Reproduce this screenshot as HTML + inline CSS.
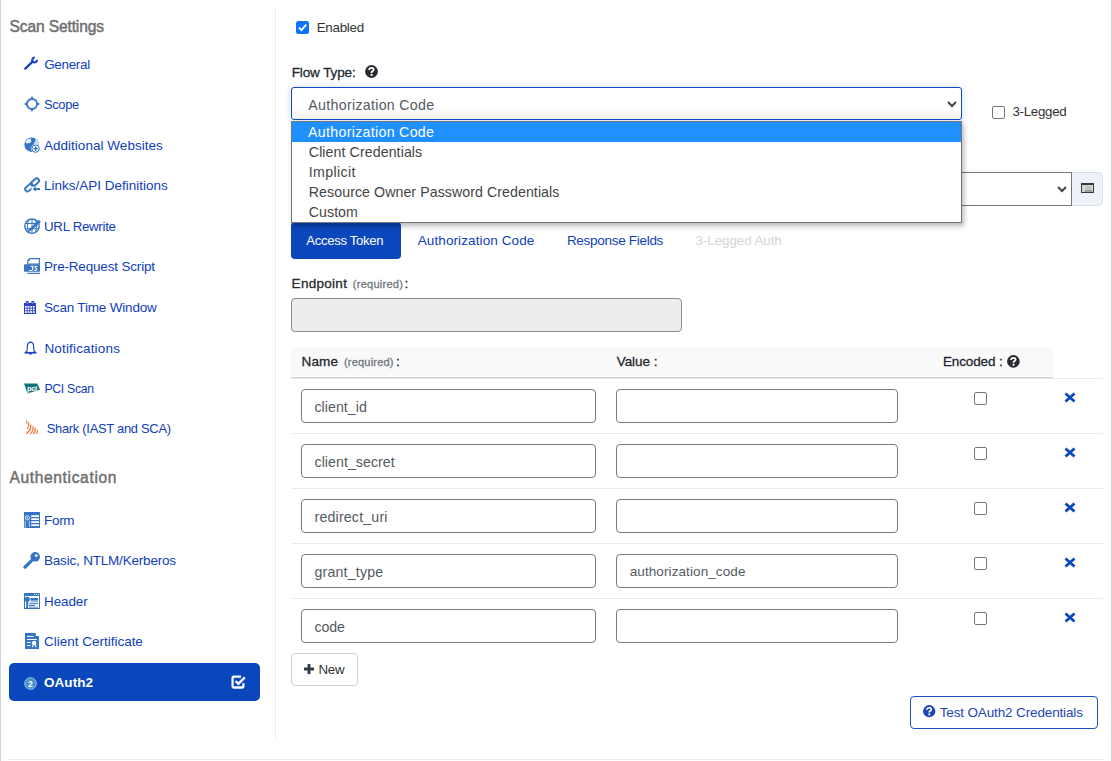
<!DOCTYPE html>
<html><head><meta charset="utf-8"><style>
html,body{margin:0;padding:0;background:#fff;}
body{width:1112px;height:761px;position:relative;overflow:hidden;font-family:"Liberation Sans",sans-serif;}
.t{position:absolute;white-space:nowrap;line-height:1;}
.b{position:absolute;}
svg.b{overflow:visible;}
</style></head><body>
<svg class="b" style="left:24px;top:56px" width="14" height="14" viewBox="0 0 14 14"><path d="M1.3 12.6 L8.6 5.6" stroke="#1640c0" stroke-width="2.3" stroke-linecap="round"/><path d="M13.04 3.79 A2.45 2.45 0 1 1 10.81 1.56" stroke="#1640c0" stroke-width="2.1" fill="none"/></svg>
<svg class="b" style="left:24px;top:96px" width="16" height="16" viewBox="0 0 16 16"><circle cx="8" cy="8" r="5.05" stroke="#3575c4" stroke-width="1.9" fill="none"/><path d="M8 0 L9.4 2.3 L6.6 2.3 Z" fill="#3575c4"/><path d="M8 16 L9.4 13.7 L6.6 13.7 Z" fill="#3575c4"/><path d="M0 8 L2.3 6.6 L2.3 9.4 Z" fill="#3575c4"/><path d="M16 8 L13.7 6.6 L13.7 9.4 Z" fill="#3575c4"/></svg>
<svg class="b" style="left:24px;top:137px" width="16" height="16" viewBox="0 0 16 16"><circle cx="7.7" cy="7.7" r="7.3" fill="#3575c4"/><path d="M1.6 4.2 Q3.8 1.2 7.2 1.5 Q6.2 3.4 7.6 4.6 Q5.6 6.8 2.6 6.6 Q1.2 5.6 1.6 4.2 Z" fill="#fff" opacity=".9"/><path d="M11.2 1.6 Q14.6 3.6 15 7.4 L11 8.2 Q9.2 7.2 10.4 5.2 Q12 4 11.2 1.6 Z" fill="#fff" opacity=".75"/><path d="M8.4 8.4 Q10.2 9 10.4 11 L10 15 Q8.4 15.2 8.5 13 Q9 11 8.4 8.4 Z" fill="#fff" opacity=".9"/><circle cx="11.6" cy="11.6" r="4.5" fill="#fff"/><circle cx="11.6" cy="11.6" r="3.7" fill="none" stroke="#3575c4" stroke-width="1"/><path d="M11.6 9.3 V13.9 M9.3 11.6 H13.9" stroke="#3575c4" stroke-width="1.4"/></svg>
<svg class="b" style="left:24px;top:177px" width="16" height="16" viewBox="0 0 16 16"><g fill="none" stroke="#3575c4" stroke-width="1.9"><rect x="-4.6" y="-2.3" width="9.2" height="4.6" rx="2.3" transform="translate(5.2 10.6) rotate(-42)"/><rect x="-4.6" y="-2.3" width="9.2" height="4.6" rx="2.3" transform="translate(11 5.2) rotate(-42)"/></g><rect x="7.4" y="9.6" width="3" height="3" fill="#fff"/><path d="M10.5 12 H16" stroke="#3575c4" stroke-width="1.9"/><path d="M8.6 12 L11.8 9.4 L11.8 14.6 Z" fill="#3575c4"/></svg>
<svg class="b" style="left:24px;top:218px" width="16" height="16" viewBox="0 0 16 16"><circle cx="8" cy="8.2" r="7.2" fill="none" stroke="#3575c4" stroke-width="1.4"/><path d="M1 5.5 H15 M1 10.8 H15 M8 1 V15.4 M4.5 2 Q2 8 4.5 14.5 M11.5 2 Q14 8 11.5 14.5" stroke="#3575c4" stroke-width="1" fill="none"/><path d="M6.5 12.2 L4.8 13.2 L5.8 11.4 L13.2 4 L14.6 5.4 Z M13.6 3.6 L14.6 2.6 L16 4 L15 5 Z" fill="#3575c4" stroke="#3575c4" stroke-width="1.2"/></svg>
<svg class="b" style="left:24px;top:258px" width="16" height="16" viewBox="0 0 16 16"><path d="M5.6 0.6 H15.4 V6 H3.8 V2.6 Z" fill="#fff" stroke="#3575c4" stroke-width="1.1"/><path d="M3.4 2.8 L5.6 0.4 V3 H3.4Z" fill="#3575c4"/><rect x="0" y="6.2" width="16" height="7.6" rx=".8" fill="#3575c4"/><rect x="3.4" y="14.8" width="12.6" height="1.2" fill="#3575c4"/><path d="M6.6 8.2 H9.4 M8.7 8.2 V11.2 Q8.5 12.5 7.3 12.5 H5.2 M13.4 8.6 Q12.2 7.9 11.1 8.5 Q10.6 9.4 11.8 9.9 Q13.2 10.4 12.8 11.8 Q11.7 12.6 10.2 12.3" stroke="#fff" stroke-width="1.1" fill="none"/></svg>
<svg class="b" style="left:24px;top:301px" width="12" height="13" viewBox="0 0 12 13"><rect x="0" y="2" width="12" height="11" fill="#2a3fc4"/><path d="M1.8 0 H4.6 V3 H1.8 Z M7.4 0 H10.2 V3 H7.4Z" fill="#2a3fc4"/><path d="M3.2 .9 V2.6 M8.8 .9 V2.6" stroke="#fff" stroke-width=".8" opacity=".75"/><rect x="1.00" y="5.00" width="1.8" height="1.75" fill="#fff"/><rect x="1.00" y="7.60" width="1.8" height="1.75" fill="#fff"/><rect x="1.00" y="10.20" width="1.8" height="1.75" fill="#fff"/><rect x="3.60" y="5.00" width="1.8" height="1.75" fill="#fff"/><rect x="3.60" y="7.60" width="1.8" height="1.75" fill="#fff"/><rect x="3.60" y="10.20" width="1.8" height="1.75" fill="#fff"/><rect x="6.20" y="5.00" width="1.8" height="1.75" fill="#fff"/><rect x="6.20" y="7.60" width="1.8" height="1.75" fill="#fff"/><rect x="6.20" y="10.20" width="1.8" height="1.75" fill="#fff"/><rect x="8.80" y="5.00" width="1.8" height="1.75" fill="#fff"/><rect x="8.80" y="7.60" width="1.8" height="1.75" fill="#fff"/><rect x="8.80" y="10.20" width="1.8" height="1.75" fill="#fff"/></svg>
<svg class="b" style="left:24px;top:341px" width="13" height="14" viewBox="0 0 13 14"><path d="M6.5 1.3 Q9.5 1.6 9.6 4.5 L10 10 L11.8 11.7 H1.2 L3 10 L3.4 4.5 Q3.5 1.6 6.5 1.3 Z" fill="none" stroke="#1d3fc0" stroke-width="1.1"/><path d="M1.2 11.7 H11.8" stroke="#1d3fc0" stroke-width="1.6"/><path d="M5 12.3 H8 L7.2 13.8 H5.8 Z" fill="#1d3fc0"/><circle cx="6.5" cy="1" r=".7" fill="#1d3fc0"/></svg>
<svg class="b" style="left:24px;top:383px" width="16" height="11" viewBox="0 0 16 11"><path d="M0 0.6 L13.3 0.6 L16 6.8 L3.4 10.6 Z" fill="#127177"/><text x="3" y="8.2" font-size="7.6" font-weight="bold" fill="#fff" font-family="Liberation Sans" letter-spacing="-.4">pci</text></svg>
<svg class="b" style="left:25px;top:420px" width="14" height="15" viewBox="0 0 14 15"><g stroke="#f47c3c" stroke-width="1.3" fill="none" stroke-linecap="round"><path d="M1.6 1.2 L2 3"/><path d="M3.6 3 Q4 6 2.6 8.5"/><path d="M5.7 5 Q6.5 9.5 1.6 13.6"/><path d="M8 6.6 Q8.6 10.6 5.6 13.6"/><path d="M10.2 8.2 Q10.5 11.5 8.6 13.6"/><path d="M12.5 10.4 Q12.6 12.6 11.5 13.6"/></g></svg>
<svg class="b" style="left:24px;top:512px" width="16" height="16" viewBox="0 0 16 16"><rect x="0" y="0" width="16" height="16" fill="#3575c4"/><path d="M7.2 3.2 H15 V5 H7.2Z M7.2 6.3 H15 V8 H7.2Z M7.2 9.3 H15 V11 H7.2Z M7.2 12.3 H15 V14 H7.2Z" fill="#fff"/><circle cx="3.4" cy="5.8" r="2.1" fill="none" stroke="#fff" stroke-width=".9" opacity=".85"/><path d="M1.2 8.8 V16 M5.3 8.8 V15" stroke="#fff" stroke-width=".8" opacity=".8"/><circle cx="3.4" cy="5.8" r=".8" fill="#fff"/></svg>
<svg class="b" style="left:24px;top:552px" width="16" height="16" viewBox="0 0 16 16"><circle cx="11.2" cy="4.8" r="4.8" fill="#3575c4"/><circle cx="12.3" cy="3.6" r="1.4" fill="#fff"/><path d="M9 7.2 L1.2 15" stroke="#3575c4" stroke-width="3.2" stroke-linecap="square"/></svg>
<svg class="b" style="left:24px;top:593px" width="16" height="16" viewBox="0 0 16 16"><rect x="0.5" y="0.5" width="15" height="15" fill="#fff" stroke="#3575c4" stroke-width="1"/><rect x="0" y="0" width="16" height="3" fill="#3575c4"/><circle cx="10.6" cy="1.5" r=".6" fill="#fff"/><circle cx="12.6" cy="1.5" r=".6" fill="#fff"/><circle cx="14.6" cy="1.5" r=".6" fill="#fff"/><circle cx="3.2" cy="6.3" r="2.6" fill="#3575c4"/><path d="M3.2 8 V15.5" stroke="#3575c4" stroke-width="2"/><rect x="6.5" y="5" width="7.5" height="2.6" fill="#3575c4"/><rect x="6.5" y="8.2" width="7.5" height="1.2" fill="#3575c4" opacity=".6"/><rect x="5" y="10.2" width="9" height="1" fill="#3575c4"/><rect x="5" y="12" width="6" height="1" fill="#3575c4"/><rect x="5" y="13.5" width="9" height="1.6" fill="#3575c4" opacity=".55"/></svg>
<svg class="b" style="left:25px;top:633px" width="14" height="16" viewBox="0 0 14 16"><path d="M0 0 H10.8 V3 H14 V16 H0 Z" fill="#3575c4"/><path d="M2 3.4 H8.6 M2 6.5 H11.8 M2 9.5 H5.8 M2 12.5 H5.5" stroke="#fff" stroke-width="1"/><circle cx="9.2" cy="10" r="2.2" fill="#fff"/><path d="M8 12 L7.5 14.2 M10.4 12 L11 14.2" stroke="#fff" stroke-width="1.2"/></svg>
<div class="b" style="left:0px;top:0px;width:1px;height:761px;background:#d6d6d6"></div>
<div class="b" style="left:1111px;top:0px;width:1px;height:761px;background:#d6d6d6"></div>
<div class="b" style="left:9px;top:759px;width:1094px;height:1px;background:#ebebeb"></div>
<div class="b" style="left:275px;top:8px;width:1px;height:730px;background:#ebebeb"></div>
<div class="t" style="left:9.50px;top:19.00px;font-size:15.60px;font-weight:400;color:#707070;letter-spacing:-0.140px;-webkit-text-stroke:0.45px #707070;">Scan Settings</div>
<div class="t" style="left:44.20px;top:58.00px;font-size:13.45px;font-weight:400;color:#0f40bd;letter-spacing:-0.300px;">General</div>
<div class="t" style="left:43.90px;top:99.00px;font-size:12.86px;font-weight:400;color:#0f40bd;letter-spacing:-0.300px;">Scope</div>
<div class="t" style="left:43.90px;top:139.00px;font-size:13.50px;font-weight:400;color:#0f40bd;letter-spacing:0.034px;">Additional Websites</div>
<div class="t" style="left:43.90px;top:179.00px;font-size:13.50px;font-weight:400;color:#0f40bd;letter-spacing:-0.003px;">Links/API Definitions</div>
<div class="t" style="left:44.00px;top:220.00px;font-size:13.32px;font-weight:400;color:#0f40bd;letter-spacing:-0.300px;">URL Rewrite</div>
<div class="t" style="left:44.00px;top:260.00px;font-size:13.50px;font-weight:400;color:#0f40bd;letter-spacing:-0.177px;">Pre-Request Script</div>
<div class="t" style="left:44.00px;top:301.00px;font-size:13.50px;font-weight:400;color:#0f40bd;letter-spacing:-0.182px;">Scan Time Window</div>
<div class="t" style="left:44.40px;top:342.00px;font-size:13.50px;font-weight:400;color:#0f40bd;letter-spacing:0.163px;">Notifications</div>
<div class="t" style="left:44.40px;top:383.00px;font-size:12.25px;font-weight:400;color:#0f40bd;letter-spacing:-0.300px;">PCI Scan</div>
<div class="t" style="left:46.70px;top:423.00px;font-size:12.96px;font-weight:400;color:#0f40bd;letter-spacing:-0.300px;">Shark (IAST and SCA)</div>
<div class="t" style="left:9.40px;top:470.00px;font-size:15.60px;font-weight:400;color:#707070;letter-spacing:0.635px;-webkit-text-stroke:0.45px #707070;">Authentication</div>
<div class="t" style="left:44.00px;top:514.00px;font-size:13.49px;font-weight:400;color:#0f40bd;letter-spacing:-0.300px;">Form</div>
<div class="t" style="left:44.00px;top:554.00px;font-size:13.50px;font-weight:400;color:#0f40bd;letter-spacing:-0.197px;">Basic, NTLM/Kerberos</div>
<div class="t" style="left:44.00px;top:595.00px;font-size:13.50px;font-weight:400;color:#0f40bd;letter-spacing:-0.123px;">Header</div>
<div class="t" style="left:44.00px;top:635.00px;font-size:13.50px;font-weight:400;color:#0f40bd;letter-spacing:-0.009px;">Client Certificate</div>
<div class="b" style="left:9px;top:663px;width:251px;height:38px;background:#0b47bc;border-radius:5px"></div>
<div class="t" style="left:44.00px;top:676.00px;font-size:13.50px;font-weight:700;color:#fff;letter-spacing:0.053px;">OAuth2</div>
<svg class="b" style="left:24px;top:677px" width="13" height="13" viewBox="0 0 13 13"><circle cx="6.5" cy="6.5" r="6.4" fill="#4a8fd0"/><circle cx="6.5" cy="6.5" r="5.7" fill="none" stroke="#cfe2f5" stroke-width="1" stroke-dasharray="1 1.2"/><text x="4" y="9.6" font-size="8.5" font-weight="bold" fill="#fff" font-family="Liberation Sans">2</text></svg>
<svg class="b" style="left:231px;top:675px" width="15" height="14" viewBox="0 0 15 14"><path d="M10 1.7 H3 Q1.6 1.7 1.6 3.1 V11.1 Q1.6 12.5 3 12.5 H11 Q12.4 12.5 12.4 11.1 V8.2" stroke="#fff" stroke-width="2.3" fill="none"/><path d="M4.6 6 L7.4 8.8 L13.8 2.4" stroke="#fff" stroke-width="2.3" fill="none"/></svg>
<div class="b" style="left:296px;top:21px;width:13px;height:13px;background:#0b72fa;border-radius:2.5px"></div>
<svg class="b" style="left:296px;top:21px" width="13" height="13" viewBox="0 0 13 13"><path d="M2.9 6.6 L5.5 9.1 L10.2 3.6" stroke="#fff" stroke-width="2" fill="none"/></svg>
<div class="t" style="left:316.70px;top:21.00px;font-size:13.42px;font-weight:400;color:#333;letter-spacing:-0.300px;">Enabled</div>
<div class="t" style="left:291.65px;top:66.00px;font-size:13.50px;font-weight:400;color:#23272b;letter-spacing:-0.105px;-webkit-text-stroke:0.28px #23272b;">Flow Type:</div>
<svg class="b" style="left:364.8px;top:64.8px" width="13" height="13" viewBox="0 0 13 13"><circle cx="6.5" cy="6.5" r="6.4" fill="#2b2b33"/><path d="M4.2 5 V4.3 Q4.6 2.9 6.5 2.9 Q8.7 2.9 8.7 4.6 Q8.7 5.7 7.4 6.3 Q6.6 6.7 6.6 7.5 V7.9" stroke="#fff" stroke-width="1.8" fill="none"/><rect x="5.6" y="8.9" width="2" height="1.9" fill="#fff"/></svg>
<div class="b" style="left:291px;top:172px;width:781px;height:34px;background:#fff;border:1px solid #767676;box-sizing:border-box"></div>
<svg class="b" style="left:1057px;top:186px" width="10" height="7" viewBox="0 0 10 7"><path d="M1 1 L5 5 L9 1" stroke="#444" stroke-width="2" fill="none"/></svg>
<div class="b" style="left:1072px;top:172px;width:31px;height:34px;background:#eef2f8;border:1px solid #d5dfec;border-left:none;border-radius:0 5px 5px 0;box-sizing:border-box"></div>
<svg class="b" style="left:1081px;top:183px" width="13" height="10" viewBox="0 0 13 10"><rect x="0.5" y="0.5" width="12" height="9" fill="#fff" stroke="#3a3a3a"/><rect x="0" y="0" width="13" height="2.2" fill="#3a3a3a"/><path d="M3.5 4 H11.5 M3.5 6 H11.5" stroke="#8a8a8a" stroke-width="1"/><path d="M3.5 8 H11.5" stroke="#3a3a3a" stroke-width="1"/><path d="M2 3 V9" stroke="#8ab" stroke-width="1"/></svg>
<div class="b" style="left:291px;top:87px;width:671px;height:33px;background:linear-gradient(#fff 60%,#f4f4f4);border:1px solid #0f47c6;border-radius:3px;box-sizing:border-box;box-shadow:0 0 6px 2px rgba(70,120,225,.16)"></div>
<div class="t" style="left:308.30px;top:98.00px;font-size:14.20px;font-weight:400;color:#555a5f;letter-spacing:0.304px;">Authorization Code</div>
<svg class="b" style="left:947px;top:101px" width="10" height="7" viewBox="0 0 10 7"><path d="M1 1 L5 5 L9 1" stroke="#444" stroke-width="2" fill="none"/></svg>
<div class="b" style="left:992px;top:106px;width:13px;height:13px;background:#fff;border:1px solid #767676;border-radius:2px;box-sizing:border-box"></div>
<div class="t" style="left:1012.50px;top:105.00px;font-size:13.34px;font-weight:400;color:#333;letter-spacing:-0.300px;">3-Legged</div>
<div class="b" style="left:291px;top:222px;width:110px;height:37px;background:#0b47bc;border-radius:4px"></div>
<div class="t" style="left:306.30px;top:234.00px;font-size:13.12px;font-weight:400;color:#fff;letter-spacing:-0.300px;">Access Token</div>
<div class="t" style="left:417.70px;top:234.00px;font-size:13.50px;font-weight:400;color:#0f40bd;letter-spacing:0.107px;">Authorization Code</div>
<div class="t" style="left:566.90px;top:234.00px;font-size:13.50px;font-weight:400;color:#0f40bd;letter-spacing:-0.291px;">Response Fields</div>
<div class="t" style="left:695.50px;top:234.00px;font-size:13.50px;font-weight:400;color:#d3d6da;letter-spacing:-0.124px;">3-Legged Auth</div>
<div class="b" style="left:291px;top:121px;width:671px;height:102px;background:#fff;border:1px solid #767676;box-sizing:border-box;box-shadow:2px 3px 5px rgba(0,0,0,.28)"></div>
<div class="b" style="left:292px;top:122px;width:669px;height:20px;background:#1e90ff"></div>
<div class="t" style="left:308.10px;top:125.00px;font-size:14.20px;font-weight:400;color:#fff;letter-spacing:0.304px;">Authorization Code</div>
<div class="t" style="left:308.80px;top:145.00px;font-size:14.20px;font-weight:400;color:#454545;letter-spacing:0.083px;">Client Credentials</div>
<div class="t" style="left:308.80px;top:165.00px;font-size:14.20px;font-weight:400;color:#454545;letter-spacing:0.348px;">Implicit</div>
<div class="t" style="left:308.80px;top:185.00px;font-size:14.20px;font-weight:400;color:#454545;letter-spacing:0.064px;">Resource Owner Password Credentials</div>
<div class="t" style="left:308.80px;top:205.00px;font-size:14.20px;font-weight:400;color:#454545;letter-spacing:0.036px;">Custom</div>
<div class="t" style="left:291.60px;top:277.00px;font-size:13.50px;font-weight:400;color:#23272b;letter-spacing:0.287px;-webkit-text-stroke:0.28px #23272b;">Endpoint</div>
<div class="t" style="left:352.80px;top:279.00px;font-size:11.00px;font-weight:400;color:#6f757b;letter-spacing:0.257px;-webkit-text-stroke:0.28px #6f757b;">(required)</div>
<div class="t" style="left:404.60px;top:277.00px;font-size:13.50px;font-weight:400;color:#23272b;letter-spacing:0.000px;-webkit-text-stroke:0.28px #23272b;">:</div>
<div class="b" style="left:291px;top:298px;width:391px;height:34px;background:#ededed;border:1px solid #8c8c8c;border-radius:4px;box-sizing:border-box"></div>
<div class="b" style="left:291px;top:347px;width:762px;height:29px;background:#f9f9f9"></div>
<div class="b" style="left:291px;top:377px;width:762px;height:1px;background:#cfcfcf"></div>
<div class="t" style="left:301.50px;top:355.00px;font-size:13.50px;font-weight:400;color:#23272b;letter-spacing:0.174px;-webkit-text-stroke:0.28px #23272b;">Name</div>
<div class="t" style="left:344.00px;top:357.00px;font-size:11.00px;font-weight:400;color:#6f757b;letter-spacing:0.202px;-webkit-text-stroke:0.28px #6f757b;">(required)</div>
<div class="t" style="left:396.00px;top:355.00px;font-size:13.50px;font-weight:400;color:#23272b;letter-spacing:0.000px;-webkit-text-stroke:0.28px #23272b;">:</div>
<div class="t" style="left:616.70px;top:355.00px;font-size:13.50px;font-weight:400;color:#23272b;letter-spacing:-0.047px;-webkit-text-stroke:0.28px #23272b;">Value :</div>
<div class="t" style="left:943.00px;top:355.00px;font-size:13.50px;font-weight:400;color:#23272b;letter-spacing:-0.131px;-webkit-text-stroke:0.28px #23272b;">Encoded :</div>
<svg class="b" style="left:1006.5px;top:354.5px" width="12.8" height="12.8" viewBox="0 0 13 13"><circle cx="6.5" cy="6.5" r="6.4" fill="#2b2b33"/><path d="M4.2 5 V4.3 Q4.6 2.9 6.5 2.9 Q8.7 2.9 8.7 4.6 Q8.7 5.7 7.4 6.3 Q6.6 6.7 6.6 7.5 V7.9" stroke="#fff" stroke-width="1.8" fill="none"/><rect x="5.6" y="8.9" width="2" height="1.9" fill="#fff"/></svg>
<div class="b" style="left:291px;top:378px;width:812px;height:1px;background:#e6ecf3"></div>
<div class="b" style="left:301px;top:389px;width:295px;height:34px;background:#fff;border:1px solid #7b7b7b;border-radius:4px;box-sizing:border-box"></div>
<div class="b" style="left:616px;top:389px;width:282px;height:34px;background:#fff;border:1px solid #7b7b7b;border-radius:4px;box-sizing:border-box"></div>
<div class="t" style="left:314.50px;top:400.00px;font-size:14.20px;font-weight:400;color:#555a5f;letter-spacing:0.029px;">client_id</div>
<div class="b" style="left:974px;top:392px;width:13px;height:13px;background:#fff;border:1px solid #767676;border-radius:2px;box-sizing:border-box"></div>
<svg class="b" style="left:1064px;top:392px" width="12" height="11" viewBox="0 0 12 11"><path d="M1.5 1.5 L10.5 9.5 M10.5 1.5 L1.5 9.5" stroke="#0b47bc" stroke-width="2.8" stroke-linecap="butt"/></svg>
<div class="b" style="left:291px;top:433px;width:812px;height:1px;background:#e6ecf3"></div>
<div class="b" style="left:301px;top:444px;width:295px;height:34px;background:#fff;border:1px solid #7b7b7b;border-radius:4px;box-sizing:border-box"></div>
<div class="b" style="left:616px;top:444px;width:282px;height:34px;background:#fff;border:1px solid #7b7b7b;border-radius:4px;box-sizing:border-box"></div>
<div class="t" style="left:314.50px;top:455.00px;font-size:14.20px;font-weight:400;color:#555a5f;letter-spacing:0.045px;">client_secret</div>
<div class="b" style="left:974px;top:447px;width:13px;height:13px;background:#fff;border:1px solid #767676;border-radius:2px;box-sizing:border-box"></div>
<svg class="b" style="left:1064px;top:447px" width="12" height="11" viewBox="0 0 12 11"><path d="M1.5 1.5 L10.5 9.5 M10.5 1.5 L1.5 9.5" stroke="#0b47bc" stroke-width="2.8" stroke-linecap="butt"/></svg>
<div class="b" style="left:291px;top:488px;width:812px;height:1px;background:#e6ecf3"></div>
<div class="b" style="left:301px;top:499px;width:295px;height:34px;background:#fff;border:1px solid #7b7b7b;border-radius:4px;box-sizing:border-box"></div>
<div class="b" style="left:616px;top:499px;width:282px;height:34px;background:#fff;border:1px solid #7b7b7b;border-radius:4px;box-sizing:border-box"></div>
<div class="t" style="left:314.50px;top:510.00px;font-size:14.20px;font-weight:400;color:#555a5f;letter-spacing:0.182px;">redirect_uri</div>
<div class="b" style="left:974px;top:502px;width:13px;height:13px;background:#fff;border:1px solid #767676;border-radius:2px;box-sizing:border-box"></div>
<svg class="b" style="left:1064px;top:502px" width="12" height="11" viewBox="0 0 12 11"><path d="M1.5 1.5 L10.5 9.5 M10.5 1.5 L1.5 9.5" stroke="#0b47bc" stroke-width="2.8" stroke-linecap="butt"/></svg>
<div class="b" style="left:291px;top:543px;width:812px;height:1px;background:#e6ecf3"></div>
<div class="b" style="left:301px;top:554px;width:295px;height:34px;background:#fff;border:1px solid #7b7b7b;border-radius:4px;box-sizing:border-box"></div>
<div class="b" style="left:616px;top:554px;width:282px;height:34px;background:#fff;border:1px solid #7b7b7b;border-radius:4px;box-sizing:border-box"></div>
<div class="t" style="left:314.50px;top:565.00px;font-size:14.20px;font-weight:400;color:#555a5f;letter-spacing:0.178px;">grant_type</div>
<div class="t" style="left:629.70px;top:565.00px;font-size:13.50px;font-weight:400;color:#555a5f;letter-spacing:0.098px;">authorization_code</div>
<div class="b" style="left:974px;top:557px;width:13px;height:13px;background:#fff;border:1px solid #767676;border-radius:2px;box-sizing:border-box"></div>
<svg class="b" style="left:1064px;top:557px" width="12" height="11" viewBox="0 0 12 11"><path d="M1.5 1.5 L10.5 9.5 M10.5 1.5 L1.5 9.5" stroke="#0b47bc" stroke-width="2.8" stroke-linecap="butt"/></svg>
<div class="b" style="left:291px;top:598px;width:812px;height:1px;background:#e6ecf3"></div>
<div class="b" style="left:301px;top:609px;width:295px;height:34px;background:#fff;border:1px solid #7b7b7b;border-radius:4px;box-sizing:border-box"></div>
<div class="b" style="left:616px;top:609px;width:282px;height:34px;background:#fff;border:1px solid #7b7b7b;border-radius:4px;box-sizing:border-box"></div>
<div class="t" style="left:314.50px;top:620.00px;font-size:14.20px;font-weight:400;color:#555a5f;letter-spacing:-0.114px;">code</div>
<div class="b" style="left:974px;top:612px;width:13px;height:13px;background:#fff;border:1px solid #767676;border-radius:2px;box-sizing:border-box"></div>
<svg class="b" style="left:1064px;top:612px" width="12" height="11" viewBox="0 0 12 11"><path d="M1.5 1.5 L10.5 9.5 M10.5 1.5 L1.5 9.5" stroke="#0b47bc" stroke-width="2.8" stroke-linecap="butt"/></svg>
<div class="b" style="left:291px;top:653px;width:67px;height:33px;background:#fff;border:1px solid #cfcfcf;border-radius:4px;box-sizing:border-box"></div>
<svg class="b" style="left:304px;top:664px" width="10" height="10" viewBox="0 0 10 10"><path d="M5 0 V10 M0 5 H10" stroke="#343a44" stroke-width="2.9"/></svg>
<div class="t" style="left:318.50px;top:663.00px;font-size:13.30px;font-weight:400;color:#333;letter-spacing:-0.300px;">New</div>
<div class="b" style="left:910px;top:696px;width:188px;height:33px;background:#fff;border:1px solid #2150c4;border-radius:4px;box-sizing:border-box"></div>
<svg class="b" style="left:923.3px;top:705.4px" width="12.4" height="12.4" viewBox="0 0 13 13"><circle cx="6.5" cy="6.5" r="6.4" fill="#1d45b6"/><path d="M4.2 5 V4.3 Q4.6 2.9 6.5 2.9 Q8.7 2.9 8.7 4.6 Q8.7 5.7 7.4 6.3 Q6.6 6.7 6.6 7.5 V7.9" stroke="#fff" stroke-width="1.8" fill="none"/><rect x="5.6" y="8.9" width="2" height="1.9" fill="#fff"/></svg>
<div class="t" style="left:939.70px;top:706.00px;font-size:13.50px;font-weight:400;color:#1f44b8;letter-spacing:-0.139px;">Test OAuth2 Credentials</div>
</body></html>
